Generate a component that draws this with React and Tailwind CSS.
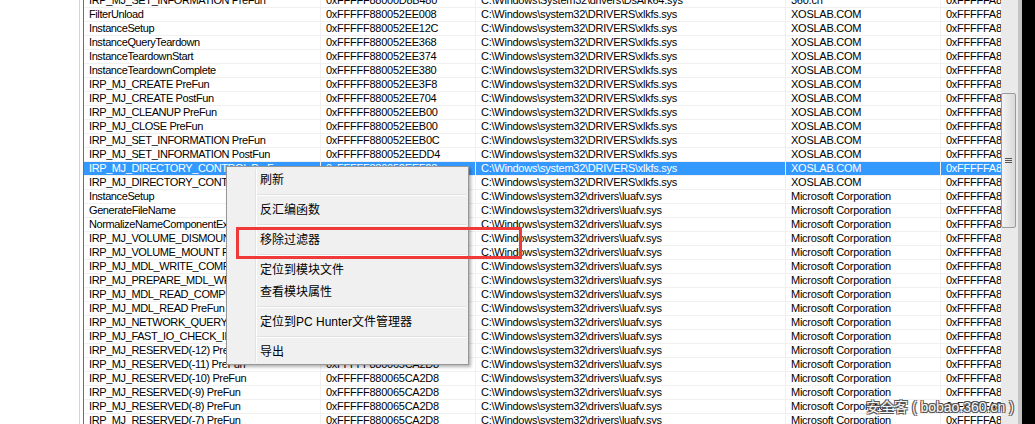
import React from "react";

const XL = "C:\\Windows\\system32\\DRIVERS\\xlkfs.sys";
const LU = "C:\\Windows\\system32\\drivers\\luafv.sys";
const MS = "Microsoft Corporation";
const XO = "XOSLAB.COM";

const rows = [
  ["IRP_MJ_SET_INFORMATION PreFun", "0xFFFFF88000D8B480", "C:\\Windows\\System32\\drivers\\DsArk64.sys", "360.cn"],
  ["FilterUnload", "0xFFFFF880052EE008", XL, XO],
  ["InstanceSetup", "0xFFFFF880052EE12C", XL, XO],
  ["InstanceQueryTeardown", "0xFFFFF880052EE368", XL, XO],
  ["InstanceTeardownStart", "0xFFFFF880052EE374", XL, XO],
  ["InstanceTeardownComplete", "0xFFFFF880052EE380", XL, XO],
  ["IRP_MJ_CREATE PreFun", "0xFFFFF880052EE3F8", XL, XO],
  ["IRP_MJ_CREATE PostFun", "0xFFFFF880052EE704", XL, XO],
  ["IRP_MJ_CLEANUP PreFun", "0xFFFFF880052EEB00", XL, XO],
  ["IRP_MJ_CLOSE PreFun", "0xFFFFF880052EEB00", XL, XO],
  ["IRP_MJ_SET_INFORMATION PreFun", "0xFFFFF880052EEB0C", XL, XO],
  ["IRP_MJ_SET_INFORMATION PostFun", "0xFFFFF880052EEDD4", XL, XO],
  ["IRP_MJ_DIRECTORY_CONTROL PreFun", "0xFFFFF880052EEF28", XL, XO, true],
  ["IRP_MJ_DIRECTORY_CONTROL PostFun", "0xFFFFF880052EF1A0", XL, XO],
  ["InstanceSetup", "0xFFFFF880065B6A10", LU, MS],
  ["GenerateFileName", "0xFFFFF880065B7C54", LU, MS],
  ["NormalizeNameComponentEx", "0xFFFFF880065B7E30", LU, MS],
  ["IRP_MJ_VOLUME_DISMOUNT PreFun", "0xFFFFF880065CA2D8", LU, MS],
  ["IRP_MJ_VOLUME_MOUNT PreFun", "0xFFFFF880065CA2D8", LU, MS],
  ["IRP_MJ_MDL_WRITE_COMPLETE PreFun", "0xFFFFF880065CA2D8", LU, MS],
  ["IRP_MJ_PREPARE_MDL_WRITE PreFun", "0xFFFFF880065CA2D8", LU, MS],
  ["IRP_MJ_MDL_READ_COMPLETE PreFun", "0xFFFFF880065CA2D8", LU, MS],
  ["IRP_MJ_MDL_READ PreFun", "0xFFFFF880065CA2D8", LU, MS],
  ["IRP_MJ_NETWORK_QUERY_OPEN PreFun", "0xFFFFF880065CA2D8", LU, MS],
  ["IRP_MJ_FAST_IO_CHECK_IF_POSSIBLE PreFun", "0xFFFFF880065CA2D8", LU, MS],
  ["IRP_MJ_RESERVED(-12) PreFun", "0xFFFFF880065CA2D8", LU, MS],
  ["IRP_MJ_RESERVED(-11) PreFun", "0xFFFFF880065CA2D8", LU, MS],
  ["IRP_MJ_RESERVED(-10) PreFun", "0xFFFFF880065CA2D8", LU, MS],
  ["IRP_MJ_RESERVED(-9) PreFun", "0xFFFFF880065CA2D8", LU, MS],
  ["IRP_MJ_RESERVED(-8) PreFun", "0xFFFFF880065CA2D8", LU, MS],
  ["IRP_MJ_RESERVED(-7) PreFun", "0xFFFFF880065CA2D8", LU, MS],
];

const menu = [
  "刷新",
  "-",
  "反汇编函数",
  "-",
  "移除过滤器",
  "-",
  "定位到模块文件",
  "查看模块属性",
  "-",
  "定位到PC Hunter文件管理器",
  "-",
  "导出",
];

function Row({ r }) {
  const sel = r[4];
  const cell = "overflow-hidden whitespace-nowrap border-r border-[#f0f0f0] pl-[5px]";
  return (
    <div
      className={`grid h-[14px] grid-cols-[237px_155px_310px_155px_60px] border-b border-[#f0f0f0] leading-[13px] ${
        sel ? "bg-[#3399ff] text-white" : "text-black"
      }`}
    >
      <div className={`${cell} pl-[4px] tracking-[-0.4px]`}>{r[0]}</div>
      <div className={cell}>{r[1]}</div>
      <div className={cell}>{r[2]}</div>
      <div className={cell}>{r[3]}</div>
      <div className="overflow-hidden whitespace-nowrap pl-[5px]">0xFFFFFA8004C1B2E0</div>
    </div>
  );
}

function ContextMenu() {
  return (
    <div className="absolute left-[226px] top-[166px] w-[243px] border border-[#979797] bg-[#f0f0f0] pt-[2px] pb-[1px] shadow-[2px_2px_3px_rgba(0,0,0,0.3)] font-['Liberation_Sans','Noto_Sans_CJK_SC',sans-serif] text-[12px] tracking-normal text-black">
      <div className="absolute bottom-[2px] left-[28px] top-[2px] w-[2px] border-l border-[#e2e3e3] bg-white" />
      {menu.map((m, i) =>
        m === "-" ? (
          <div key={i} className="flex h-[8px] items-center pl-[29px] pr-[2px]">
            <div className="h-[2px] w-full border-t border-[#e0e0e0] bg-white" />
          </div>
        ) : (
          <div key={i} className="flex h-[22px] items-center pl-[33px] leading-[22px]">
            {m}
          </div>
        )
      )}
    </div>
  );
}

export default function App() {
  return (
    <div className="relative flex h-[424px] w-[1035px] overflow-hidden bg-white font-['Liberation_Sans',sans-serif] text-[11px] tracking-[-0.25px]">
      <div className="w-[80px] shrink-0 border-r border-[#d5d5d5]" />
      <div className="ml-[3px] w-[918px] shrink-0 overflow-hidden border-l border-[#6e6e6e]">
        <div className="-mt-[6px]">
          {rows.map((r, i) => (
            <Row key={i} r={r} />
          ))}
        </div>
      </div>

      {/* vertical scrollbar */}
      <div className="w-[17px] shrink-0 bg-[#eaeaea]">
        <div className="mt-[93px] flex h-[135px] w-[15px] items-center justify-center rounded-[2px] border border-[#9b9b9b] bg-gradient-to-r from-[#f4f4f4] to-[#d9d9d9]">
          <div className="flex flex-col gap-[1px]">
            <div className="h-px w-[7px] bg-[#555]" />
            <div className="h-px w-[7px] bg-[#555]" />
            <div className="h-px w-[7px] bg-[#555]" />
          </div>
        </div>
      </div>
      <div className="w-[4px] shrink-0 bg-[#c4c4c4]" />
      <div className="flex-1 bg-black" />

      <ContextMenu />

      <div className="absolute left-[236px] top-[227px] h-[32px] w-[286px] border-[3px] border-[#f03a3a]" />

      <div className="absolute left-[866px] top-[397px] whitespace-nowrap font-['Liberation_Sans','Noto_Sans_CJK_SC',sans-serif] text-[14px] leading-[20px] tracking-normal text-[#f7f7f7] [text-shadow:1px_1px_0_#555,-1px_-1px_0_#555,1px_-1px_0_#555,-1px_1px_0_#555]">
        安全客 ( bobao.360.cn )
      </div>
    </div>
  );
}
